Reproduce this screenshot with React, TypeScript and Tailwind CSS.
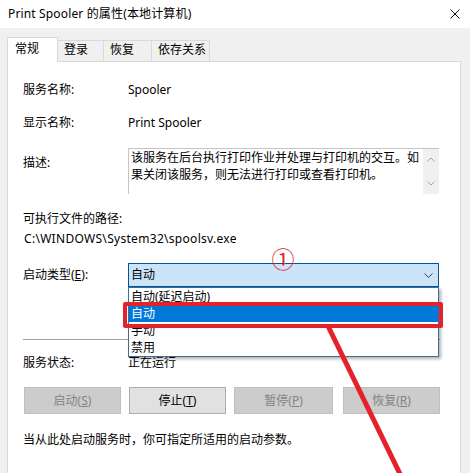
import React from "react";

const tabs = [
  { label: "常规", w: "w-[51px]", active: true },
  { label: "登录", w: "w-[46px]", active: false },
  { label: "恢复", w: "w-[48px]", active: false },
  { label: "依存关系", w: "w-[58px]", active: false },
];

const options = ["自动(延迟启动)", "自动", "手动", "禁用"];

function Btn({ text, hot, enabled, w }: { text: string; hot: string; enabled?: boolean; w: string }) {
  return (
    <div
      className={`flex h-[27px] ${w} items-center justify-center border ${
        enabled ? "border-[#adadad] bg-[#e1e1e1] text-black" : "border-[#bfbfbf] bg-[#cccccc] text-[#838383]"
      }`}
    >
      {text}(<span className="underline">{hot}</span>)
    </div>
  );
}

export default function App() {
  return (
    <div className="relative h-[473px] w-[470px] overflow-hidden bg-[#f0f0f0] font-['Noto_Sans','Noto_Sans_CJK_SC',sans-serif] text-[12px] leading-[16px] text-black">
      {/* title bar */}
      <div className="flex h-[28px] items-center justify-between bg-white pl-[8px] pr-[10px]">
        <span className="tracking-[0.15px]">Print Spooler 的属性(本地计算机)</span>
        <svg width="10" height="10" viewBox="0 0 10 10">
          <path d="M0.5 0.5 L9.5 9.5 M9.5 0.5 L0.5 9.5" stroke="#111" strokeWidth="1" />
        </svg>
      </div>

      {/* tabs */}
      <div className="flex h-[33px] items-end pl-[7px]">
        {tabs.map((t) =>
          t.active ? (
            <div
              key={t.label}
              className={`relative z-10 -mb-px h-[25px] ${t.w} border border-b-0 border-[#d9d9d9] bg-white pl-[7px] pt-[3px]`}
            >
              {t.label}
            </div>
          ) : (
            <div
              key={t.label}
              className={`h-[21px] ${t.w} border border-b-0 border-l-0 border-[#d9d9d9] bg-[#f0f0f0] pl-[6px] pt-[1px]`}
            >
              {t.label}
            </div>
          )
        )}
      </div>

      {/* panel */}
      <div className="ml-[7px] h-[420px] w-[454px] border border-[#d9d9d9] bg-white pl-[15px] pr-[20px] pt-[20px]">
        <div className="grid grid-cols-[105px_1fr]">
          <span>服务名称:</span>
          <span>Spooler</span>
        </div>
        <div className="mt-[17px] grid grid-cols-[105px_1fr]">
          <span>显示名称:</span>
          <span>Print Spooler</span>
        </div>

        <div className="mt-[17px] flex">
          <span className="w-[105px] pt-[7px]">描述:</span>
          <div className="relative h-[46px] w-[311px] border-l border-t border-[#c4c4c4] pl-[2px] leading-[17px]">
            该服务在后台执行打印作业并处理与打印机的交互。如
            <br />
            果关闭该服务，则无法进行打印或查看打印机。
            <div className="absolute right-0 top-0 flex h-full w-[16px] flex-col items-center justify-between bg-[#f0f0f0] py-[8px]">
              <svg width="8" height="5" viewBox="0 0 8 5">
                <path d="M0.5 4.5 L4 1 L7.5 4.5" fill="none" stroke="#a3a3a3" strokeWidth="1" />
              </svg>
              <svg width="8" height="5" viewBox="0 0 8 5">
                <path d="M0.5 0.5 L4 4 L7.5 0.5" fill="none" stroke="#a3a3a3" strokeWidth="1" />
              </svg>
            </div>
          </div>
        </div>

        <div className="mt-[17px]">可执行文件的路径:</div>
        <div className="mt-[4px] pl-[1px] tracking-[0.3px]">C:\WINDOWS\System32\spoolsv.exe</div>

        <div className="mt-[16px] flex items-center">
          <span className="w-[105px]">
            启动类型(<span className="underline">E</span>):
          </span>
          <div className="relative h-[24px] w-[311px]">
            <div className="flex h-full items-center justify-between border border-[#005499] bg-[#cce4f7] pl-[2px] pr-[5px]">
              <span>自动</span>
              <svg width="9" height="5" viewBox="0 0 9 5">
                <path d="M0.5 0.5 L4.5 4.5 L8.5 0.5" fill="none" stroke="#404040" strokeWidth="1" />
              </svg>
            </div>
            {/* dropped list */}
            <div className="absolute left-0 top-[24px] z-20 w-[311px] border border-[#3e6e96] bg-white shadow-[2px_2px_3px_rgba(0,0,0,0.3)]">
              {options.map((o, i) => (
                <div
                  key={o}
                  className={`h-[17px] pl-[2px] leading-[17px] ${i === 1 ? "bg-[#0078d7] text-white" : ""}`}
                >
                  {o}
                </div>
              ))}
            </div>
          </div>
        </div>

        <div className="mt-[52px] h-px bg-[#a0a0a0]" />

        <div className="mt-[15px] grid grid-cols-[105px_1fr]">
          <span>服务状态:</span>
          <span>正在运行</span>
        </div>

        <div className="mt-[16px] flex gap-[8px] pl-[1px]">
          <Btn text="启动" hot="S" w="w-[97px]" />
          <Btn text="停止" hot="T" w="w-[97px]" enabled />
          <Btn text="暂停" hot="P" w="w-[99px]" />
          <div className="ml-[2px]">
            <Btn text="恢复" hot="R" w="w-[97px]" />
          </div>
        </div>

        <div className="mt-[18px]">当从此处启动服务时，你可指定所适用的启动参数。</div>
      </div>

      {/* annotations */}
      <div className="pointer-events-none absolute left-[271px] top-[245px] z-30 w-[24px] text-center text-[23px] leading-[28px] text-[#e5222b]">
        ①
      </div>
      <div className="pointer-events-none absolute left-[123px] top-[302px] z-30 h-[26px] w-[320px] rounded-[2px] border-[4px] border-[#e5222b]" />
      <svg className="pointer-events-none absolute left-0 top-0 z-30" width="470" height="473" viewBox="0 0 470 473">
        <line x1="328" y1="326" x2="401" y2="476" stroke="#e5222b" strokeWidth="5" />
      </svg>
    </div>
  );
}
